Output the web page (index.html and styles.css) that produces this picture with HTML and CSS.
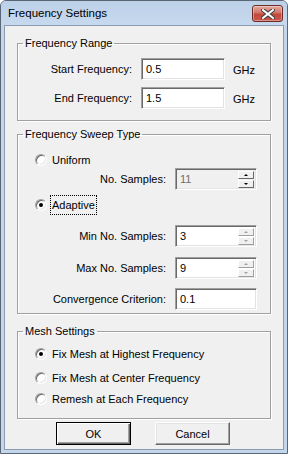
FILE: index.html
```html
<!DOCTYPE html>
<html lang="en">
<head>
  <meta charset="UTF-8">
  <title>Frequency Settings</title>
  <link rel="stylesheet" href="styles.css">
</head>
<body>
  <div class="window">
    <div class="titlebar">
      <span class="title">Frequency Settings</span>
      <button class="close" aria-label="Close">
        <svg width="14" height="10" viewBox="0 0 14 10">
          <path d="M2 1 L12 9 M12 1 L2 9" stroke="#3c3c3c" stroke-width="4" stroke-linecap="square"/>
          <path d="M2 1 L12 9 M12 1 L2 9" stroke="#fff" stroke-width="2" stroke-linecap="square"/>
        </svg>
      </button>
    </div>

    <div class="client">
      <fieldset class="group range">
        <legend>Frequency Range</legend>
        <div class="row r1">
          <label class="lbl">Start Frequency:</label>
          <div class="field">0.5</div>
          <span class="unit">GHz</span>
        </div>
        <div class="row r2">
          <label class="lbl">End Frequency:</label>
          <div class="field">1.5</div>
          <span class="unit">GHz</span>
        </div>
      </fieldset>

      <fieldset class="group sweep">
        <legend>Frequency Sweep Type</legend>
        <div class="radio-row uniform">
          <span class="radio"></span>
          <span class="rlabel">Uniform</span>
        </div>
        <div class="row s1">
          <label class="lbl">No. Samples:</label>
          <div class="field spin disabled">
            <span>11</span>
            <div class="spin-btns">
              <span class="sbtn"><i class="up"></i></span>
              <span class="sbtn"><i class="down"></i></span>
            </div>
          </div>
        </div>
        <div class="radio-row adaptive">
          <span class="radio on"></span>
          <span class="rlabel focus">Adaptive</span>
        </div>
        <div class="row s2">
          <label class="lbl">Min No. Samples:</label>
          <div class="field spin">
            <span>3</span>
            <div class="spin-btns grey">
              <span class="sbtn"><i class="up"></i></span>
              <span class="sbtn"><i class="down"></i></span>
            </div>
          </div>
        </div>
        <div class="row s3">
          <label class="lbl">Max No. Samples:</label>
          <div class="field spin">
            <span>9</span>
            <div class="spin-btns grey">
              <span class="sbtn"><i class="up"></i></span>
              <span class="sbtn"><i class="down"></i></span>
            </div>
          </div>
        </div>
        <div class="row s4">
          <label class="lbl">Convergence Criterion:</label>
          <div class="field">0.1</div>
        </div>
      </fieldset>

      <fieldset class="group mesh">
        <legend>Mesh Settings</legend>
        <div class="radio-row m1">
          <span class="radio on"></span>
          <span class="rlabel">Fix Mesh at Highest Frequency</span>
        </div>
        <div class="radio-row m2">
          <span class="radio"></span>
          <span class="rlabel">Fix Mesh at Center Frequency</span>
        </div>
        <div class="radio-row m3">
          <span class="radio"></span>
          <span class="rlabel">Remesh at Each Frequency</span>
        </div>
      </fieldset>

      <div class="buttons">
        <button class="btn default">OK</button>
        <button class="btn">Cancel</button>
      </div>
    </div>
  </div>
</body>
</html>
```

FILE: styles.css
```css
body {
  margin: 0;
  font-family: "Liberation Sans", Arial, sans-serif;
  font-size: 11px;
  color: #000;
}

.window {
  width: 288px;
  height: 454px;
  box-sizing: border-box;
  border: 1px solid #5a6675;
  border-radius: 6px 6px 0 0;
  background: #c3d6ec;
  display: flex;
  flex-direction: column;
}

.titlebar {
  height: 24px;
  display: flex;
  align-items: center;
  justify-content: space-between;
  padding: 0 4px 0 7px;
  background: linear-gradient(to bottom, #bcd0e8, #c6d9ee);
  border-radius: 5px 5px 0 0;
}

.title {
  font-size: 11.5px;
}

.close {
  width: 31px;
  height: 17px;
  padding: 0;
  margin-top: 1px;
  border: 1px solid #6e2a24;
  border-radius: 3px;
  background: linear-gradient(to bottom, #e3aba2, #d27467 45%, #c2483b 55%, #c9594b);
  box-shadow: inset 0 0 0 1px rgba(255,255,255,0.35);
  display: flex;
  align-items: center;
  justify-content: center;
}

.client {
  flex: 1;
  margin: 0 3px 3px;
  background: #f0f0f0;
  border: 1px solid #8c9cb0;
  display: flex;
  flex-direction: column;
}

.group {
  box-sizing: border-box;
  width: 254px;
  min-width: 0;
  margin: 0 0 0 12px;
  padding: 0;
  border: 1px solid #a0a0a0;
  box-shadow: 1px 1px 0 #fff, inset 1px 1px 0 #fff;
}

.group legend {
  margin-left: 5px;
  padding: 0 2px;
  line-height: 14px;
}

.range { height: 85px; margin-top: 10px; }
.sweep { height: 187px; margin-top: 6px; }
.mesh { height: 95px; margin-top: 10px; }

.row {
  display: flex;
  align-items: center;
  height: 22px;
}

.lbl {
  text-align: right;
  padding-right: 9px;
  flex: none;
}

.range .lbl { width: 114px; }
.sweep .lbl { width: 148px; }

.r1 { margin-top: 8px; }
.r2 { margin-top: 7px; }

.field {
  box-sizing: border-box;
  height: 22px;
  width: 84px;
  background: #fff;
  border: 1px solid;
  border-color: #a0a0a0 #fff #fff #a0a0a0;
  box-shadow: inset 1px 1px 0 #696969, inset -1px -1px 0 #e3e3e3;
  padding: 0 4px;
  display: flex;
  align-items: center;
}

.sweep .field { width: 82px; }

.unit { margin-left: 8px; margin-top: 2px; }

.spin { justify-content: space-between; padding-right: 2px; }

.spin.disabled {
  background: #f0f0f0;
  color: #6d6d6d;
}

.spin-btns {
  display: flex;
  flex-direction: column;
  gap: 1px;
}

.sbtn {
  box-sizing: border-box;
  width: 16px;
  height: 8px;
  background: #f0f0f0;
  border: 1px solid;
  border-color: #fff #696969 #696969 #fff;
  display: flex;
  align-items: center;
  justify-content: center;
}

.sbtn i {
  width: 0;
  height: 0;
  border-left: 2px solid transparent;
  border-right: 2px solid transparent;
}

.sbtn i.up { border-bottom: 2px solid #000; }
.sbtn i.down { border-top: 2px solid #000; }

.grey .sbtn { border-color: #fff #a0a0a0 #a0a0a0 #fff; }
.grey .sbtn i.up { border-bottom-color: #a0a0a0; }
.grey .sbtn i.down { border-top-color: #a0a0a0; }

.s1 { margin-top: 0; }
.s2 { margin-top: 10px; }
.s3 { margin-top: 10px; }
.s4 { margin-top: 9px; }

.radio-row {
  display: flex;
  align-items: center;
  height: 16px;
  padding-left: 17px;
}

.radio {
  box-sizing: border-box;
  width: 12px;
  height: 12px;
  border-radius: 50%;
  background: #fff;
  border: 1px solid;
  border-color: #a0a0a0 #fff #fff #a0a0a0;
  box-shadow: inset 1px 1px 0 #696969, inset -1px -1px 0 #e3e3e3;
  display: flex;
  align-items: center;
  justify-content: center;
  margin-right: 4px;
  flex: none;
}

.radio.on::after {
  content: "";
  width: 4px;
  height: 4px;
  border-radius: 50%;
  background: #000;
}

.rlabel { padding: 0 1px; }

.rlabel.focus {
  outline: 1px dotted #000;
  line-height: 18px;
}

.uniform { margin-top: 11px; }
.adaptive { margin-top: 5px; height: 20px; }

.m1 { margin-top: 8px; }
.m2 { margin-top: 8px; }
.m3 { margin-top: 5px; }

.buttons {
  display: flex;
  justify-content: center;
  gap: 24px;
  margin-top: 3px;
  padding-right: 2px;
}

.btn {
  box-sizing: border-box;
  width: 75px;
  height: 23px;
  font-family: inherit;
  font-size: 11px;
  background: #f0f0f0;
  border: 1px solid;
  border-color: #fff #696969 #696969 #fff;
  box-shadow: inset -1px -1px 0 #a0a0a0, inset 1px 1px 0 #e3e3e3;
  padding: 0;
}

.btn.default {
  border: 1px solid #000;
  box-shadow: inset 1px 1px 0 #fff, inset -1px -1px 0 #696969, inset -2px -2px 0 #a0a0a0;
}
```
